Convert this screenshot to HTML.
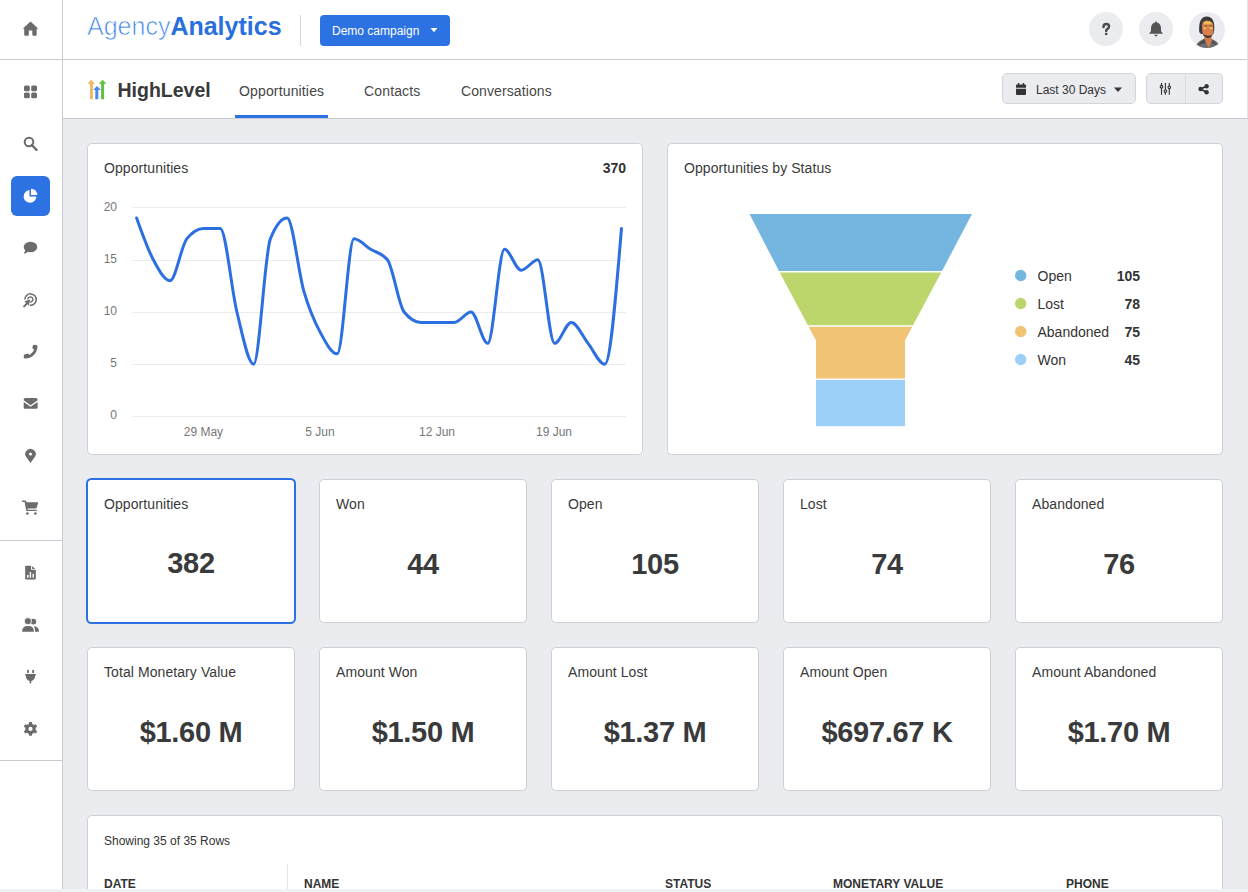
<!DOCTYPE html>
<html><head><meta charset="utf-8">
<style>
*{box-sizing:border-box;margin:0;padding:0}
html,body{width:1248px;height:892px;overflow:hidden;background:#fff;font-family:"Liberation Sans",sans-serif;color:#333}
.abs{position:absolute}
#side{position:absolute;left:0;top:0;width:63px;height:892px;background:#fff;border-right:1px solid #c8cbd0}
.hl{position:absolute;left:0;width:62px;height:1px;background:#c8cbd0}
#main{position:absolute;left:63px;top:119px;width:1185px;height:773px;background:#ebecf0}
#top{position:absolute;left:63px;top:0;width:1185px;height:60px;background:#fff;border-bottom:1px solid #c8cbd0}
#sub{position:absolute;left:63px;top:60px;width:1185px;height:59px;background:#fff;border-bottom:1px solid #c8cbd0}
.card{position:absolute;background:#fff;border:1px solid #cdd0d5;border-radius:4.5px}
.ct{position:absolute;left:16px;top:16px;font-size:14px;line-height:16px;color:#3a3a3a;letter-spacing:0.08px}
.stat{width:208px;height:144px}
.stat .v{position:absolute;left:0;right:0;top:69px;text-align:center;font-size:29px;line-height:30px;font-weight:bold;color:#393a3b;letter-spacing:-0.3px}
.btn{position:absolute;background:#ebecef;border:1px solid #d3d5d9;border-radius:5px}
.circ{position:absolute;width:34px;height:34px;border-radius:50%;background:#ebecef}
.th{position:absolute;top:877px;font-size:12px;font-weight:bold;color:#333;line-height:14px}
svg{position:absolute;overflow:visible}
</style></head><body>
<div id="side">
 <div class="hl" style="top:59px"></div>
 <div class="hl" style="top:540px"></div>
 <div class="hl" style="top:760px"></div>
 <div class="abs" style="left:11px;top:176px;width:39px;height:40px;background:#2c72e3;border-radius:6px"></div>
</div>
<div id="top">
 <div class="abs" style="left:24px;top:11px;font-size:25px;line-height:30px;white-space:nowrap"><span style="color:#3d84e8;-webkit-text-stroke:0.7px #fff">Agency</span><b style="color:#2a6fde">Analytics</b></div>
 <div class="abs" style="left:237px;top:15px;width:1px;height:31px;background:#d5d6d9"></div>
 <div class="abs" style="left:257px;top:15px;width:130px;height:31px;background:#2c72e3;border-radius:4px;color:#fff;font-size:12px;line-height:33px;padding-left:12px">Demo campaign</div>
 <svg style="left:367px;top:28px" width="8" height="5"><path d="M0.5,0 L7.5,0 L4,4.2 Z" fill="#fff"/></svg>
 <div class="circ" style="left:1026px;top:12px"></div>
 <div class="circ" style="left:1076px;top:12px"></div>
 <div class="abs" style="left:1126px;top:12px;width:36px;height:36px;border-radius:50%;background:#ebecef;overflow:hidden">
  <svg style="left:0;top:0" width="36" height="36">
   <path d="M6,36 Q7.5,30 13.5,27.5 L16,26 L21,26 L24,27.5 Q30,30 31,36 Z" fill="#6c6d6e"/>
   <path d="M9,33 Q12,29 15.5,27.5 L17,31 Z M28,33 Q25,29 22,27.5 L21,30.5 Z" fill="#4a4b4c"/>
   <path d="M15.3,24 L22.3,24 L23,29 L19.5,36 L16.5,29.5 Z" fill="#d27b4b"/>
   <path d="M10.2,20 Q9.2,5 17.8,4.6 Q26.2,5 25.2,18 L24.4,22 L12,22 Z" fill="#393a3b"/>
   <path d="M13,12.5 Q13.5,8.5 18.5,8.6 Q24.2,8.8 24.2,14 L24.3,19 Q24,25.5 19.2,26 Q14.2,25.8 13.4,20 Z" fill="#d8814c"/>
   <path d="M13.4,20 Q14.2,25.8 19.2,26 Q24,25.5 24.3,19 L23.5,22.5 Q21,24 19,23.8 Q16.5,24 13.9,22 Z" fill="#3d3535"/>
   <path d="M15,10.5 Q18,8.6 22.5,10.5 L22,12.5 Q18.5,11.6 15.5,12.8 Z" fill="#f0c25a"/>
   <path d="M14.3,15.4 L16.8,15 L16.6,17.4 L14.6,17.2 Z M20.5,15 L23.6,15.2 L23.2,17.2 L20.8,17 Z" fill="#efc05a"/>
   <path d="M15.5,14 L17.8,13.8 M20.5,13.8 L23,14" stroke="#4a3a30" stroke-width="0.7"/>
  </svg>
 </div>
</div>
<div id="sub">
 <div class="abs" style="left:54.5px;top:17.5px;font-size:19.5px;line-height:24px;font-weight:bold;color:#393939">HighLevel</div>
 <div class="abs" style="left:176px;top:23px;font-size:14px;line-height:16px;color:#444;letter-spacing:0.15px">Opportunities</div>
 <div class="abs" style="left:172px;top:55px;width:93px;height:3px;background:#2c72e3"></div>
 <div class="abs" style="left:301px;top:23px;font-size:14px;line-height:16px;color:#484848;letter-spacing:0.15px">Contacts</div>
 <div class="abs" style="left:398px;top:23px;font-size:14px;line-height:16px;color:#484848;letter-spacing:0.1px">Conversations</div>
 <div class="btn" style="left:939px;top:13px;width:134px;height:31px"></div>
 <div class="abs" style="left:973px;top:22px;font-size:12px;line-height:16px;color:#333">Last 30 Days</div>
 <div class="btn" style="left:1083px;top:13px;width:77px;height:31px"></div>
 <div class="abs" style="left:1122px;top:14px;width:1px;height:29px;background:#dcdde0"></div>
</div>
<div id="main"></div>
<div class="card" style="left:87px;top:143px;width:556px;height:312px">
 <div class="ct">Opportunities</div>
 <div class="abs" style="right:16px;top:16px;font-size:14px;line-height:16px;font-weight:bold">370</div>
</div>
<div class="card" style="left:667px;top:143px;width:556px;height:312px">
 <div class="ct">Opportunities by Status</div>
</div>
<div class="card stat" style="left:86px;top:478px;width:210px;height:146px;border:2px solid #2c72e3;border-radius:5.5px"><div class="ct" style="left:16px;top:16px">Opportunities</div><div class="v" style="top:68px">382</div></div>
<div class="card stat" style="left:319px;top:479px"><div class="ct">Won</div><div class="v">44</div></div>
<div class="card stat" style="left:551px;top:479px"><div class="ct">Open</div><div class="v">105</div></div>
<div class="card stat" style="left:783px;top:479px"><div class="ct">Lost</div><div class="v">74</div></div>
<div class="card stat" style="left:1015px;top:479px"><div class="ct">Abandoned</div><div class="v">76</div></div>
<div class="card stat" style="left:87px;top:647px"><div class="ct">Total Monetary Value</div><div class="v">$1.60 M</div></div>
<div class="card stat" style="left:319px;top:647px"><div class="ct">Amount Won</div><div class="v">$1.50 M</div></div>
<div class="card stat" style="left:551px;top:647px"><div class="ct">Amount Lost</div><div class="v">$1.37 M</div></div>
<div class="card stat" style="left:783px;top:647px"><div class="ct">Amount Open</div><div class="v">$697.67 K</div></div>
<div class="card stat" style="left:1015px;top:647px"><div class="ct">Amount Abandoned</div><div class="v">$1.70 M</div></div>
<div class="card" style="left:87px;top:815px;width:1136px;height:200px">
 <div class="abs" style="left:16px;top:18px;font-size:12px;line-height:14px;color:#333">Showing 35 of 35 Rows</div>
 <div class="abs" style="left:199px;top:48px;width:1px;height:40px;background:#e3e4e7"></div>
</div>
<div class="th" style="left:104px">DATE</div>
<div class="th" style="left:304px">NAME</div>
<div class="th" style="left:665px">STATUS</div>
<div class="th" style="left:833px">MONETARY VALUE</div>
<div class="th" style="left:1066px">PHONE</div>
<div class="abs" style="left:0;top:889px;width:1248px;height:3px;background:#f1f2f4"></div>
<div class="abs" style="left:1247px;top:0;width:1px;height:118px;background:#e4e5e8"></div>

<svg style="left:0;top:0" width="1248" height="892">
 <g stroke="#ececee" stroke-width="1">
  <line x1="132" x2="626" y1="207.5" y2="207.5"/><line x1="132" x2="626" y1="260.5" y2="260.5"/><line x1="132" x2="626" y1="312.5" y2="312.5"/><line x1="132" x2="626" y1="364.5" y2="364.5"/><line x1="132" x2="626" y1="416.5" y2="416.5"/>
 </g>
 <g font-family="Liberation Sans" font-size="12" fill="#777" text-anchor="end">
  <text x="117" y="211">20</text><text x="117" y="263.3">15</text><text x="117" y="315.3">10</text><text x="117" y="367.3">5</text><text x="117" y="419.3">0</text>
 </g>
 <g font-family="Liberation Sans" font-size="12" fill="#777" text-anchor="middle">
  <text x="203.4" y="436">29 May</text><text x="320" y="436">5 Jun</text><text x="437" y="436">12 Jun</text><text x="554" y="436">19 Jun</text>
 </g>
 <path d="M136.60,217.95 C142.17,233.62 147.75,249.30 153.32,259.75 C158.89,270.20 164.47,280.65 170.04,280.65 C175.61,280.65 181.19,245.82 186.76,238.85 C192.33,231.88 197.91,228.40 203.48,228.40 C209.05,228.40 214.63,228.40 220.20,228.40 C225.77,228.40 231.35,289.36 236.92,312.00 C242.49,334.64 248.07,364.25 253.64,364.25 C259.21,364.25 264.79,252.78 270.36,238.85 C275.93,224.92 281.51,217.95 287.08,217.95 C292.65,217.95 298.23,271.94 303.80,291.10 C309.37,310.26 314.95,322.45 320.52,332.90 C326.09,343.35 331.67,353.80 337.24,353.80 C342.81,353.80 348.39,238.85 353.96,238.85 C359.53,238.85 365.11,245.82 370.68,249.30 C376.25,252.78 381.83,252.78 387.40,259.75 C392.97,266.72 398.55,305.03 404.12,312.00 C409.69,318.97 415.27,322.45 420.84,322.45 C426.41,322.45 431.99,322.45 437.56,322.45 C443.13,322.45 448.71,322.45 454.28,322.45 C459.85,322.45 465.43,312.00 471.00,312.00 C476.57,312.00 482.15,343.35 487.72,343.35 C493.29,343.35 498.87,249.30 504.44,249.30 C510.01,249.30 515.59,270.20 521.16,270.20 C526.73,270.20 532.31,259.75 537.88,259.75 C543.45,259.75 549.03,343.35 554.60,343.35 C560.17,343.35 565.75,322.45 571.32,322.45 C576.89,322.45 582.47,336.38 588.04,343.35 C593.61,350.32 599.19,364.25 604.76,364.25 C610.33,364.25 615.91,296.32 621.48,228.40" fill="none" stroke="#2c6fe0" stroke-width="3" stroke-linecap="round" stroke-linejoin="round"/>
 <polygon points="749.5,214 972,214 942,271 779,271" fill="#74b6e0"/>
 <polygon points="779.8,272.6 941.2,272.6 913,325.3 807.8,325.3" fill="#bdd66c"/>
 <polygon points="808.6,326.8 912.2,326.8 905,340.4 905,378.4 816,378.4 816,340.4" fill="#f1c374"/>
 <rect x="816" y="379.8" width="89" height="46.4" fill="#9dd0f9"/>
 <g font-family="Liberation Sans" font-size="14">
  <circle cx="1020.7" cy="275.5" r="5.7" fill="#74b6e0"/><circle cx="1020.7" cy="303.5" r="5.7" fill="#bdd66c"/><circle cx="1020.7" cy="331.5" r="5.7" fill="#f1c374"/><circle cx="1020.7" cy="359.5" r="5.7" fill="#9dd0f9"/>
  <g fill="#333"><text x="1037.5" y="280.5">Open</text><text x="1037.5" y="308.5">Lost</text><text x="1037.5" y="336.5">Abandoned</text><text x="1037.5" y="364.5">Won</text></g>
  <g fill="#333" font-weight="bold" text-anchor="end"><text x="1140" y="280.5">105</text><text x="1140" y="308.5">78</text><text x="1140" y="336.5">75</text><text x="1140" y="364.5">45</text></g>
 </g>
 <!-- sidebar icons -->
 <g fill="#6b6b6b">
  <path d="M30.5,21.6 L38.3,28.7 L36.7,28.7 L36.7,34.8 Q36.7,35.8 35.7,35.8 L33.3,35.8 Q32.3,35.8 32.3,34.8 L32.3,30.5 L28.8,30.5 L28.8,34.8 Q28.8,35.8 27.8,35.8 L25.2,35.8 Q24.2,35.8 24.2,34.8 L24.2,28.7 L22.7,28.7 Z"/>
  <rect x="24" y="85.5" width="5.8" height="5.8" rx="1.6"/><rect x="31.2" y="85.5" width="5.8" height="5.8" rx="1.6"/><rect x="24" y="92.5" width="5.8" height="5.8" rx="1.6"/><rect x="31.2" y="92.5" width="5.8" height="5.8" rx="1.6"/>
  <circle cx="29" cy="142" r="4.3" fill="none" stroke="#6b6b6b" stroke-width="2"/><path d="M31.8,145 L36.5,149.8" stroke="#6b6b6b" stroke-width="2.4" stroke-linecap="round"/>
  <ellipse cx="30.5" cy="247" rx="6.8" ry="5.35"/><path d="M25.6,250 L23.6,253.7 Q26.2,253.3 28.4,251.6 Z"/>
  <g fill="none" stroke="#6b6b6b"><path d="M24.8,299.6 A5.7,5.7 0 1 1 29.6,305.2" stroke-width="1.5"/><path d="M27.8,299.4 A2.55,2.55 0 1 1 30.2,301.95" stroke-width="1.4"/><path d="M24.1,306.4 L27.6,302.9" stroke-width="2" stroke-linecap="round"/></g>
  <path d="M24.4,301.3 L30.4,299.5 L28.6,305.6 Z"/>
  <path d="M33.2,344.8 L36.3,345 Q37.6,345.3 37.5,346.6 Q37.3,352.5 32.5,356.3 Q28.6,358.9 24.8,358.5 Q23.6,358.3 23.7,357.2 L23.9,354.7 L28,353.4 L29.6,355 Q33.3,352.5 34.2,349.6 L32.2,348.3 Z"/>
  <path d="M23.7,399.6 Q23.7,398.1 25.2,398.1 L36.1,398.1 Q37.6,398.1 37.6,399.6 L37.6,400.3 L30.65,405.3 L23.7,400.3 Z M23.7,401.9 L30.65,406.7 L37.6,401.9 L37.6,407.6 Q37.6,408.8 36.4,408.8 L24.9,408.8 Q23.7,408.8 23.7,407.6 Z"/>
  <path d="M30.5,463 L26.4,457.3 A5.2,5.2 0 1 1 34.6,457.3 Z M30.5,452.4 A1.6,1.6 0 1 0 30.5,455.6 A1.6,1.6 0 1 0 30.5,452.4 Z" fill-rule="evenodd"/>
  <path d="M22.6,500.6 L25,500.6 Q26.2,500.6 26.4,501.8 L26.5,502.2 L37.6,502.2 Q38.3,502.2 38.1,503 L36.6,507.9 Q36.4,508.5 35.8,508.5 L27.5,508.5 L27.7,509.8 L36.2,509.8 Q36.9,509.8 36.9,510.45 Q36.9,511.1 36.2,511.1 L26.9,511.1 Q26.3,511.1 26.2,510.5 L24.6,502 L22.6,502 Q21.9,502 21.9,501.3 Q21.9,500.6 22.6,500.6 Z"/><circle cx="27.4" cy="513.5" r="1.35"/><circle cx="35.4" cy="513.5" r="1.35"/>
  <path d="M26.2,565.7 L31.1,565.7 L31.1,569 Q31.1,569.9 32,569.9 L35.8,569.9 L35.8,578.5 Q35.8,579.5 34.8,579.5 L26.2,579.5 Q25.2,579.5 25.2,578.5 L25.2,566.7 Q25.2,565.7 26.2,565.7 Z M27,575 L28.6,575 L28.6,577.8 L27,577.8 Z M29.7,572.1 L31.1,572.1 L31.1,577.8 L29.7,577.8 Z M32.5,573.8 L33.9,573.8 L33.9,577.8 L32.5,577.8 Z" fill-rule="evenodd"/>
  <path d="M32.1,566.1 L35.4,569.2 L32.1,569.2 Z"/>
  <circle cx="33.3" cy="621.6" r="2.9"/><circle cx="27.9" cy="621.2" r="3.6" stroke="#fff" stroke-width="0.9"/>
  <path d="M22.1,631.8 Q22.1,626.1 27.5,626.1 L28.6,626.1 Q33.9,626.1 33.9,631.8 Z"/><path d="M34,626.3 Q38.9,626.6 39,631.8 L35.1,631.8 Q35,628.6 34,626.3 Z"/>
  <rect x="27" y="669.8" width="1.9" height="3.4" rx="0.9"/><rect x="32.2" y="669.8" width="1.9" height="3.4" rx="0.9"/>
  <path d="M25.2,673.9 L35.8,673.9 L35.8,675.6 L35.1,675.6 Q35.2,680 31.3,681 L31.3,682.8 Q31.3,683.6 30.45,683.6 Q29.6,683.6 29.6,682.8 L29.6,681 Q25.7,680 25.8,675.6 L25.2,675.6 Z"/>
  <path d="M28.80,723.90 L29.15,722.00 L31.85,722.00 L32.20,723.90 L33.98,724.93 L35.80,724.28 L37.15,726.62 L35.68,727.87 L35.68,729.93 L37.15,731.18 L35.80,733.52 L33.98,732.87 L32.20,733.90 L31.85,735.80 L29.15,735.80 L28.80,733.90 L27.02,732.87 L25.20,733.52 L23.85,731.18 L25.32,729.93 L25.32,727.87 L23.85,726.62 L25.20,724.28 L27.02,724.93 Z M30.50,726.80 A2.1,2.1 0 1 0 30.50,731.00 A2.1,2.1 0 1 0 30.50,726.80 Z" fill-rule="evenodd"/>
 </g>
 <!-- active pie icon -->
 <g fill="#fff">
  <path d="M29.5,190 A6.4,6.4 0 1 0 36.4,196.6 L29.5,196.6 Z"/>
  <path d="M31,188.7 A6.3,6.3 0 0 1 37.3,195 L31,195 Z"/>
 </g>
 <!-- top icons -->
 <g fill="#555">
  <path d="M1103.5,27 Q1103.6,24 1106.3,24 Q1109,24 1109,26.5 Q1109,28 1107.5,28.8 Q1106.2,29.5 1106.2,31" fill="none" stroke="#4d4d4d" stroke-width="2.5" stroke-linecap="round"/><circle cx="1106.2" cy="34" r="1.35" fill="#4d4d4d"/>
  <path d="M1156,21.5 Q1157,21.5 1157,22.6 Q1161,23.6 1161,28.5 L1161,31 L1163,33.8 L1149,33.8 L1151,31 L1151,28.5 Q1151,23.6 1155,22.6 Q1155,21.5 1156,21.5 Z M1154.3,34.8 L1157.7,34.8 Q1157.5,36.6 1156,36.6 Q1154.5,36.6 1154.3,34.8 Z"/>
 </g>
 <!-- sub header icons -->
 <g fill="#333">
  <path d="M1016,85.5 Q1016,84.5 1017,84.5 L1025,84.5 Q1026,84.5 1026,85.5 L1026,87.8 L1016,87.8 Z M1016,88.8 L1026,88.8 L1026,94 Q1026,95 1025,95 L1017,95 Q1016,95 1016,94 Z"/>
  <rect x="1017.8" y="83" width="1.5" height="2.5" rx="0.5"/><rect x="1022.7" y="83" width="1.5" height="2.5" rx="0.5"/>
  <path d="M1114,87.5 L1122,87.5 L1118,92 Z"/>
  <g stroke="#333" stroke-width="1.1"><line x1="1161.5" y1="83" x2="1161.5" y2="94.8"/><line x1="1165.4" y1="83" x2="1165.4" y2="94.8"/><line x1="1169.3" y1="83" x2="1169.3" y2="94.8"/></g>
  <g fill="#ebecef" stroke="#333" stroke-width="1.1"><circle cx="1161.5" cy="86.7" r="1.3"/><circle cx="1165.4" cy="91.1" r="1.3"/><circle cx="1169.3" cy="87.3" r="1.3"/></g>
  <circle cx="1206.6" cy="86.2" r="2.2"/><circle cx="1206.6" cy="92.3" r="2.2"/><circle cx="1200.6" cy="89" r="2.2"/><path d="M1200.6,89 L1206.6,86.2 M1200.6,89 L1206.6,92.3" stroke="#333" stroke-width="1.8"/>
 </g>
 <!-- highlevel logo -->
 <g>
  <path d="M91.2,79.8 L95,83.8 L92.9,83.8 L92.9,99.2 L90,99.2 L90,83.8 L87.5,83.8 Z" fill="#f0b862"/>
  <path d="M97,85.9 L101,90.1 L98.3,90.1 L98.3,99.2 L95.3,99.2 L95.3,90.1 L93.1,90.1 Z" fill="#4a88ea"/>
  <path d="M102.6,79.8 L106.6,83.8 L104.1,83.8 L104.1,99.2 L101.1,99.2 L101.1,83.8 L98.7,83.8 Z" fill="#62c040"/>
 </g>
</svg>
</body></html>
